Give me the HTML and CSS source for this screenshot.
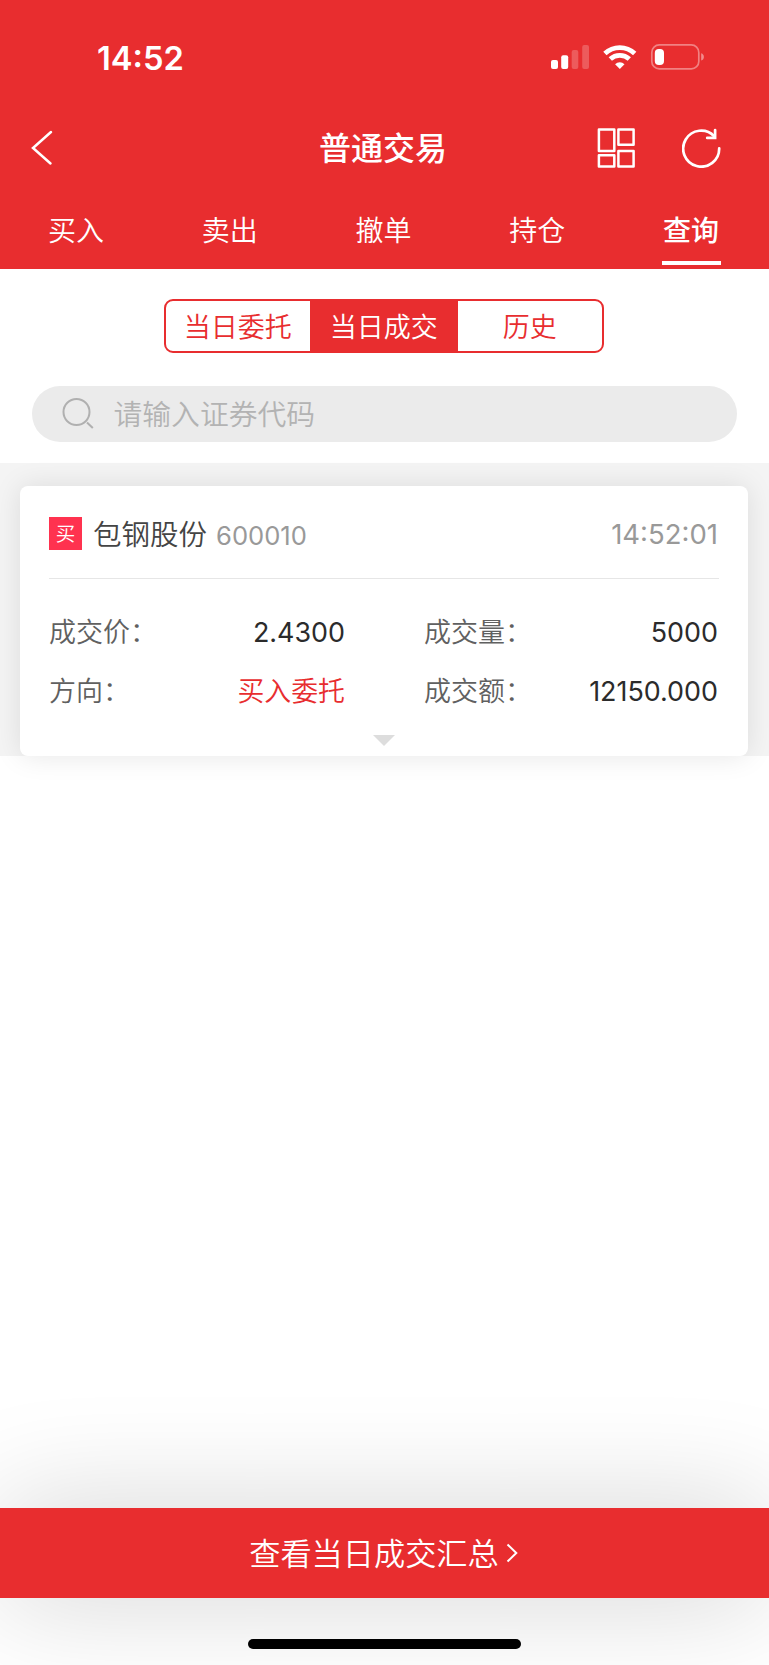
FILE: index.html
```
<!DOCTYPE html>
<html lang="zh-CN">
  <head>
    <meta charset="utf-8">
    <meta name="viewport" content="width=device-width, initial-scale=1">
    <title>普通交易</title>
    <link rel="stylesheet" href="styles.css">
  </head>
  <body>
    <div class="page">

      <!-- header -->
      <header class="header">
        <div class="status">
          <span class="status_time">14:52</span>
          <svg class="status_icons" width="156" height="28" viewBox="0 0 156 28">
            <g fill="#fff">
              <rect x="1" y="17" width="7" height="9" rx="2"/>
              <rect x="11.2" y="12.3" width="7" height="13.7" rx="2"/>
              <rect x="21.7" y="7" width="6.6" height="19" rx="2" opacity=".22"/>
              <rect x="32.2" y="2" width="6.8" height="24" rx="2" opacity=".22"/>
            </g>
            <g fill="none" stroke="#fff" stroke-width="4.8">
              <path d="M54.9 10.6a21.6 21.6 0 0 1 29.8 0"/>
              <path d="M60.3 16.1a13.9 13.9 0 0 1 19 0"/>
            </g>
            <path d="M69.8 26l-4.7-4.8a6.8 6.8 0 0 1 9.4 0z" fill="#fff"/>
            <rect x="101.8" y="1.9" width="47" height="24" rx="7.5" fill="none" stroke="#fff" stroke-width="1.7" opacity=".4"/>
            <rect x="104.8" y="6" width="9.2" height="16" rx="4" fill="#fff"/>
            <path d="M151.2 10.2c3.6 1.2 3.6 6.2 0 7.4z" fill="#fff" opacity=".45"/>
          </svg>
        </div>
        <div class="nav">
          <a class="nav_back">
            <svg width="24" height="36" viewBox="0 0 24 36"><path d="M21 2L3 18L20.5 33.5" fill="none" stroke="#fff" stroke-width="2.5" stroke-linecap="round"/></svg>
          </a>
          <h1 class="nav_title">普通交易</h1>
          <div class="nav_tools">
            <svg width="40" height="40" viewBox="0 0 40 40" fill="none" stroke="#fff" stroke-width="2.5" stroke-linejoin="round">
              <rect x="1.9" y="1.4" width="15.4" height="21.6"/>
              <rect x="21.4" y="1.4" width="15.2" height="15.4"/>
              <rect x="1.9" y="27.2" width="15.4" height="11.2"/>
              <rect x="21.4" y="23" width="15.2" height="15.4"/>
            </svg>
            <svg width="40" height="40" viewBox="0 0 40 40" fill="none" stroke="#fff" stroke-width="2.7" stroke-linecap="round">
              <path d="M37.2 20.4A18 18 0 1 1 32.2 8.2"/>
              <path d="M33.1 2V9.9H25.2"/>
            </svg>
          </div>
        </div>
        <nav class="tabs">
          <a class="tab">买入</a>
          <a class="tab">卖出</a>
          <a class="tab">撤单</a>
          <a class="tab">持仓</a>
          <a class="tab tab-active">查询</a>
        </nav>
      </header>

      <!-- filter -->
      <section class="filter">
        <div class="segment">
          <span class="segment_item">当日委托</span>
          <span class="segment_item segment_item-active">当日成交</span>
          <span class="segment_item">历史</span>
        </div>
        <div class="search">
          <svg width="34" height="34" viewBox="0 0 34 34" fill="none" stroke="#b0b0b0" stroke-width="2">
            <circle cx="15.5" cy="15" r="13"/>
            <path d="M26 25.5L31.8 31"/>
          </svg>
          <span class="search_txt">请输入证券代码</span>
        </div>
      </section>

      <!-- list -->
      <main class="list">
        <article class="card">
          <div class="card_head">
            <span class="badge">买</span>
            <span class="card_name">包钢股份</span>
            <span class="card_code">600010</span>
            <span class="card_time">14:52:01</span>
          </div>
          <div class="card_body">
            <div class="field"><span>成交价：</span><b>2.4300</b></div>
            <div class="field"><span>成交量：</span><b>5000</b></div>
            <div class="field"><span>方向：</span><b class="buy">买入委托</b></div>
            <div class="field"><span>成交额：</span><b>12150.000</b></div>
          </div>
          <div class="card_more"></div>
        </article>
      </main>

      <!-- footer -->
      <footer class="footer">
        <a class="summary">
          <span class="summary_txt">查看当日成交汇总</span>
          <svg width="12" height="20" viewBox="0 0 12 20"><path d="M1.5 1.5L10.3 10L1.5 18.5" fill="none" stroke="#fff" stroke-width="2"/></svg>
        </a>
        <div class="home_bar"></div>
      </footer>
    </div>
  </body>
</html>
```
FILE: styles.css
```
html, body{
  margin: 0;
  padding: 0;
  width: 100%;
  height: 100%;
  background-color: #FFFFFF;
}
body{
  font-family: Inter, "Noto Sans CJK SC", sans-serif;
  line-height: 1;
}
svg{
  display: block;
}
.page{
  display: flex;
  flex-direction: column;
  height: 1665px;
  overflow: hidden;
}
.header{
  display: flex;
  flex-direction: column;
  height: 269px;
  background: #E82D2F;
  color: #FFFFFF;
}
.status{
  display: flex;
  justify-content: space-between;
  align-items: center;
  height: 114px;
  box-sizing: border-box;
  padding: 0 63px 0 97px;
}
.status_time{
  padding-top: 2px;
  font-size: 32.7px;
  font-weight: 600;
}
.nav{
  display: grid;
  grid-template-columns: 1fr auto 1fr;
  align-items: center;
  height: 68px;
  padding: 0 47px 0 30px;
}
.nav_title{
  margin: 0;
  padding: 2px 0 0 14px;
  font-size: 32px;
  font-weight: 500;
}
.nav_tools{
  display: flex;
  justify-content: flex-end;
  gap: 45px;
}
.tabs{
  display: flex;
  justify-content: space-between;
  height: 83px;
  box-sizing: border-box;
  padding: 0 48px 0 47px;
}
.tab{
  display: flex;
  justify-content: center;
  align-items: center;
  width: 59px;
  box-sizing: border-box;
  padding: 18px 1px 0 0;
  border-bottom: 4px solid transparent;
  font-size: 28px;
  font-weight: 350;
}
.tab-active{
  border-bottom-color: #FFFFFF;
  font-weight: 500;
}
.filter{
  height: 193.5px;
  padding: 30px 32px 0 31.5px;
  box-sizing: border-box;
}
.segment{
  display: grid;
  grid-template-columns: 144px 148px 1fr;
  width: 440px;
  height: 54px;
  box-sizing: border-box;
  margin: 0 auto 33px;
  border: 2px solid #E82D2F;
  border-radius: 9px;
  overflow: hidden;
}
.segment_item{
  display: flex;
  align-items: center;
  justify-content: center;
  padding: 2px 1px 0 0;
  font-size: 27px;
  font-weight: 350;
  color: #E82D2F;
}
.segment_item-active{
  background: #E82D2F;
  color: #FFFFFF;
}
.search{
  display: flex;
  align-items: center;
  gap: 19px;
  height: 56px;
  box-sizing: border-box;
  padding-left: 29px;
  border-radius: 28px;
  background: #EBEBEB;
}
.search_txt{
  padding-top: 2px;
  font-size: 28.8px;
  font-weight: 350;
  color: #B3B3B3;
}
.list{
  height: 293px;
  box-sizing: border-box;
  padding: 23.5px 21px 0 20px;
  background: #F4F4F4;
}
.card{
  height: 269.5px;
  box-sizing: border-box;
  padding: 0 29px;
  border-radius: 8px;
  background: #FFFFFF;
  box-shadow: 0 0 28px rgba(0, 0, 0, .1);
}
.card_head{
  display: flex;
  align-items: center;
  height: 93px;
  box-sizing: border-box;
  padding-top: 3px;
  border-bottom: 1px solid #E6E6E6;
}
.badge{
  width: 33px;
  height: 31px;
  padding-top: 2px;
  margin-right: 11px;
  background: #FF324F;
  color: #FFFFFF;
  font-size: 19.5px;
  font-weight: 350;
  line-height: 31px;
  text-align: center;
}
.card_name{
  padding-top: 4px;
  margin-right: 9px;
  font-size: 28.5px;
  font-weight: 350;
  color: #444444;
}
.card_code{
  padding-top: 4px;
  font-size: 25.6px;
  color: #999999;
}
.card_time{
  padding-top: 3px;
  margin: 0 1px 0 auto;
  font-size: 27.5px;
  color: #999999;
}
.card_body{
  display: grid;
  grid-template-columns: 296px 294px;
  grid-auto-rows: 59px;
  justify-content: space-between;
  padding: 24px 1px 0 0;
}
.field{
  display: flex;
  justify-content: space-between;
  align-items: center;
  font-size: 27px;
  font-weight: 350;
  color: #606060;
}
.field b{
  font-size: 26.9px;
  font-weight: 400;
  color: #2B2B2B;
}
.field .buy{
  font-weight: 350;
  color: #E82D2F;
}
.card_more{
  width: 0;
  margin: 14px auto 0;
  border: 11px solid transparent;
  border-top-color: #DDDDDD;
  border-bottom: 0;
}
.footer{
  margin-top: auto;
}
.summary{
  display: flex;
  justify-content: center;
  align-items: center;
  gap: 7px;
  height: 89.5px;
  padding-right: 2px;
  background: #E82D2F;
  color: #FFFFFF;
  font-size: 31.2px;
  font-weight: 350;
  box-shadow: 0 0 115px rgba(0, 0, 0, .18);
}
.summary_txt{
  padding-top: 3px;
}
.home_bar{
  width: 273px;
  height: 10px;
  margin: 41.5px auto 16px;
  border-radius: 5px;
  background: #000000;
}
```
